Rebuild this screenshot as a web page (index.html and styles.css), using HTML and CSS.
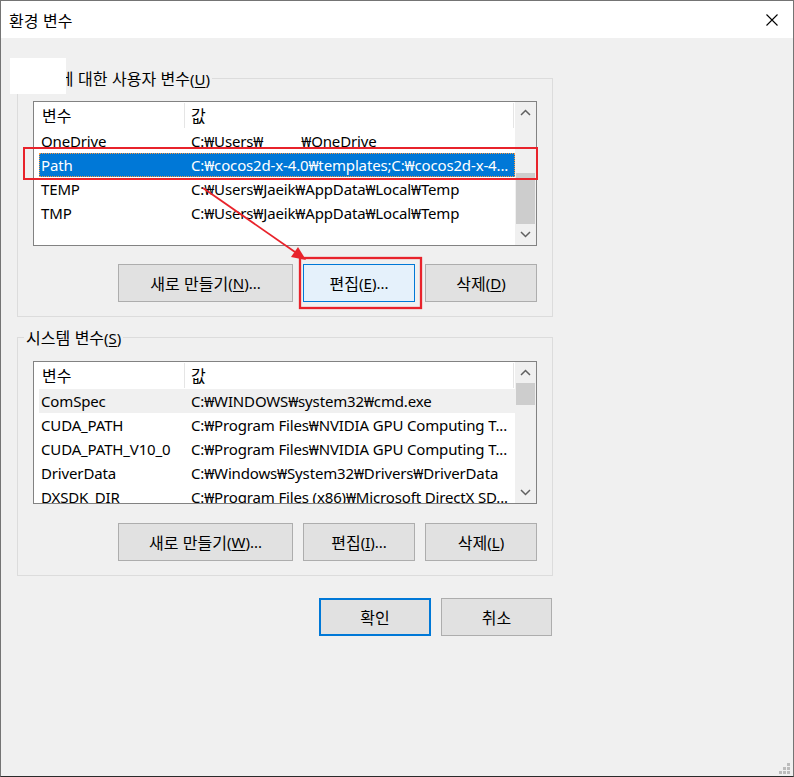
FILE: index.html
```html
<!DOCTYPE html>
<html lang="ko">
<head>
<meta charset="utf-8">
<title>환경 변수</title>
<link rel="stylesheet" href="styles.css">
</head>
<body>
<div class="window">
  <div class="titlebar">
    <span class="title ko">환경 변수</span>
    <svg class="close" width="12" height="12" viewBox="0 0 12 12"><path d="M0.5 0.5L11.5 11.5M11.5 0.5L0.5 11.5" stroke="#000" stroke-width="1.1" fill="none"/></svg>
  </div>
  <div class="body">
    <fieldset class="group group-user">
      <legend>Jaeik<span class="ko">에 대한 사용자 변수</span>(<u>U</u>)</legend>
      <div class="list">
        <div class="list-main">
          <div class="hdr"><div class="c1 ko">변수</div><div class="c2 ko">값</div></div>
          <div class="row"><div class="c1">OneDrive</div><div class="c2">C:₩Users₩<span class="gap"></span>₩OneDrive</div></div>
          <div class="row sel"><div class="c1">Path</div><div class="c2">C:₩cocos2d-x-4.0₩templates;C:₩cocos2d-x-4...</div></div>
          <div class="row"><div class="c1">TEMP</div><div class="c2">C:₩Users₩Jaeik₩AppData₩Local₩Temp</div></div>
          <div class="row"><div class="c1">TMP</div><div class="c2">C:₩Users₩Jaeik₩AppData₩Local₩Temp</div></div>
        </div>
        <div class="vscroll">
          <div class="arrow"><svg width="11" height="7" viewBox="0 0 11 7"><path d="M1 6L5.5 1.5L10 6" stroke="#606060" stroke-width="1.5" fill="none"/></svg></div>
          <div class="track end"><div class="thumb thumb-user"></div></div>
          <div class="arrow"><svg width="11" height="7" viewBox="0 0 11 7"><path d="M1 1L5.5 5.5L10 1" stroke="#606060" stroke-width="1.5" fill="none"/></svg></div>
        </div>
      </div>
      <div class="btns">
        <button class="btn w-new"><span class="ko">새로 만들기</span>(<u>N</u>)...</button>
        <button class="btn w-std default"><span class="ko">편집</span>(<u>E</u>)...</button>
        <button class="btn w-std"><span class="ko">삭제</span>(<u>D</u>)</button>
      </div>
    </fieldset>

    <fieldset class="group group-sys">
      <legend><span class="ko">시스템 변수</span>(<u>S</u>)</legend>
      <div class="list list-sys">
        <div class="list-main">
          <div class="hdr"><div class="c1 ko">변수</div><div class="c2 ko">값</div></div>
          <div class="row hot"><div class="c1">ComSpec</div><div class="c2">C:₩WINDOWS₩system32₩cmd.exe</div></div>
          <div class="row"><div class="c1">CUDA_PATH</div><div class="c2">C:₩Program Files₩NVIDIA GPU Computing T...</div></div>
          <div class="row"><div class="c1">CUDA_PATH_V10_0</div><div class="c2">C:₩Program Files₩NVIDIA GPU Computing T...</div></div>
          <div class="row"><div class="c1">DriverData</div><div class="c2">C:₩Windows₩System32₩Drivers₩DriverData</div></div>
          <div class="row"><div class="c1">DXSDK_DIR</div><div class="c2">C:₩Program Files (x86)₩Microsoft DirectX SD...</div></div>
        </div>
        <div class="vscroll">
          <div class="arrow"><svg width="11" height="7" viewBox="0 0 11 7"><path d="M1 6L5.5 1.5L10 6" stroke="#606060" stroke-width="1.5" fill="none"/></svg></div>
          <div class="track"><div class="thumb thumb-sys"></div></div>
          <div class="arrow"><svg width="11" height="7" viewBox="0 0 11 7"><path d="M1 1L5.5 5.5L10 1" stroke="#606060" stroke-width="1.5" fill="none"/></svg></div>
        </div>
      </div>
      <div class="btns btns-sys">
        <button class="btn w-new"><span class="ko">새로 만들기</span>(<u>W</u>)...</button>
        <button class="btn w-std"><span class="ko">편집</span>(<u>I</u>)...</button>
        <button class="btn w-std"><span class="ko">삭제</span>(<u>L</u>)</button>
      </div>
    </fieldset>

    <div class="footer">
      <button class="btn w-std ok"><span class="ko">확인</span></button>
      <button class="btn w-cancel"><span class="ko">취소</span></button>
    </div>
  </div>

  <svg class="annot" width="794" height="777" viewBox="0 0 794 777">
    <rect x="10" y="58" width="56" height="36" fill="#fff"/>
    <rect x="24" y="148" width="513" height="31" fill="none" stroke="#e8232b" stroke-width="2"/>
    <rect x="300" y="258" width="121" height="50" fill="none" stroke="#e8232b" stroke-width="2.3"/>
    <line x1="203" y1="188" x2="295" y2="252" stroke="#e8232b" stroke-width="1.8"/>
    <polygon points="306,260 291,257 298,247" fill="#e8232b"/>
  </svg>

  <svg class="grip" width="11" height="11" viewBox="0 0 11 11">
    <rect x="8" y="0" width="3" height="3" fill="#bcbcbc"/>
    <rect x="4" y="4" width="3" height="3" fill="#bcbcbc"/>
    <rect x="8" y="4" width="3" height="3" fill="#bcbcbc"/>
    <rect x="0" y="8" width="3" height="3" fill="#bcbcbc"/>
    <rect x="4" y="8" width="3" height="3" fill="#bcbcbc"/>
    <rect x="8" y="8" width="3" height="3" fill="#bcbcbc"/>
  </svg>
</div>
</body>
</html>
```

FILE: styles.css
```css
* { box-sizing: border-box; }
html, body { margin: 0; padding: 0; }
body {
  width: 794px;
  height: 777px;
  overflow: hidden;
  background: #f0f0f0;
  font-family: "Noto Sans", "Noto Sans CJK KR", sans-serif;
  font-size: 15px;
  color: #000;
}
.ko { font-family: "Noto Sans CJK KR", sans-serif; font-size: 16px; }
u { text-decoration: underline; text-underline-offset: 2px; text-decoration-thickness: 1px; }

.window {
  position: relative;
  width: 794px;
  height: 777px;
  border: 1px solid #747474;
  border-bottom-color: #2b2b2b;
  background: #f0f0f0;
  display: flex;
  flex-direction: column;
}

.titlebar {
  height: 37px;
  flex: none;
  background: #fff;
  display: flex;
  align-items: center;
  justify-content: space-between;
  padding: 0 15px 0 8px;
}
.title { line-height: 20px; }

.body {
  padding: 30px 0 0 16px;
  display: flex;
  flex-direction: column;
}

.group {
  margin: 0;
  min-width: 0;
  width: 536px;
  border: 1px solid #dcdcdc;
  padding: 13px 15px 14px;
}
.group legend {
  padding: 0 2px;
  margin-left: -9px;
  line-height: 20px;
  height: 20px;
}
.group-sys { margin-top: 10px; padding-top: 14px; }

.list {
  height: 145px;
  border: 1px solid #828282;
  background: #fff;
  display: flex;
}
.list-sys { height: 143px; }
.list-main { flex: 1; overflow: hidden; }

.hdr {
  display: flex;
  height: 27px;
  margin-left: 5px;
  align-items: stretch;
}
.hdr .c1, .hdr .c2 {
  border-right: 1px solid #e5e5e5;
  margin: 1px 0 1px;
  line-height: 25px;
}
.hdr .c1 { width: 146px; padding-left: 3px; flex: none; }
.hdr .c2 { width: 329px; padding-left: 6px; flex: none; }

.row {
  display: flex;
  height: 24px;
  line-height: 24px;
  margin-left: 5px;
  white-space: nowrap;
  letter-spacing: -0.15px;
}
.row .c1 { width: 146px; flex: none; padding-left: 2px; overflow: hidden; }
.row .c2 { flex: 1; padding-left: 6px; overflow: hidden; }
.row.sel {
  background: #0078d7;
  color: #fff;
  outline: 1px dotted #ff9a3c;
  outline-offset: -1px;
}
.row.hot { background: #f0f0f0; }
.gap { display: inline-block; width: 38px; }

.vscroll {
  width: 21px;
  flex: none;
  background: #f0f0f0;
  display: flex;
  flex-direction: column;
}
.arrow {
  height: 21px;
  flex: none;
  display: flex;
  align-items: center;
  justify-content: center;
}
.track { flex: 1; display: flex; flex-direction: column; justify-content: flex-start; }
.track.end { justify-content: flex-end; }
.thumb { background: #cdcdcd; margin: 0 1px; }
.thumb-user { height: 51px; }
.thumb-sys { height: 22px; }

.btns {
  display: flex;
  justify-content: flex-end;
  gap: 10px;
  margin-top: 18px;
}
.btns-sys { margin-top: 19px; }

.btn {
  height: 38px;
  margin: 0;
  padding: 0;
  background: #e1e1e1;
  border: 1px solid #adadad;
  border-radius: 0;
  font: inherit;
  color: #000;
  display: flex;
  align-items: center;
  justify-content: center;
}
.w-new { width: 175px; }
.w-std { width: 112px; }
.w-cancel { width: 111px; }
.btn.default { background: #e5f1fb; border-color: #0078d7; }
.btn.ok { border: 2px solid #0078d7; }

.footer {
  display: flex;
  justify-content: flex-end;
  gap: 10px;
  width: 535px;
  margin-top: 22px;
}

.annot {
  position: absolute;
  top: -1px;
  left: -1px;
  pointer-events: none;
}
.grip {
  position: absolute;
  right: 3px;
  bottom: 2px;
}
```
